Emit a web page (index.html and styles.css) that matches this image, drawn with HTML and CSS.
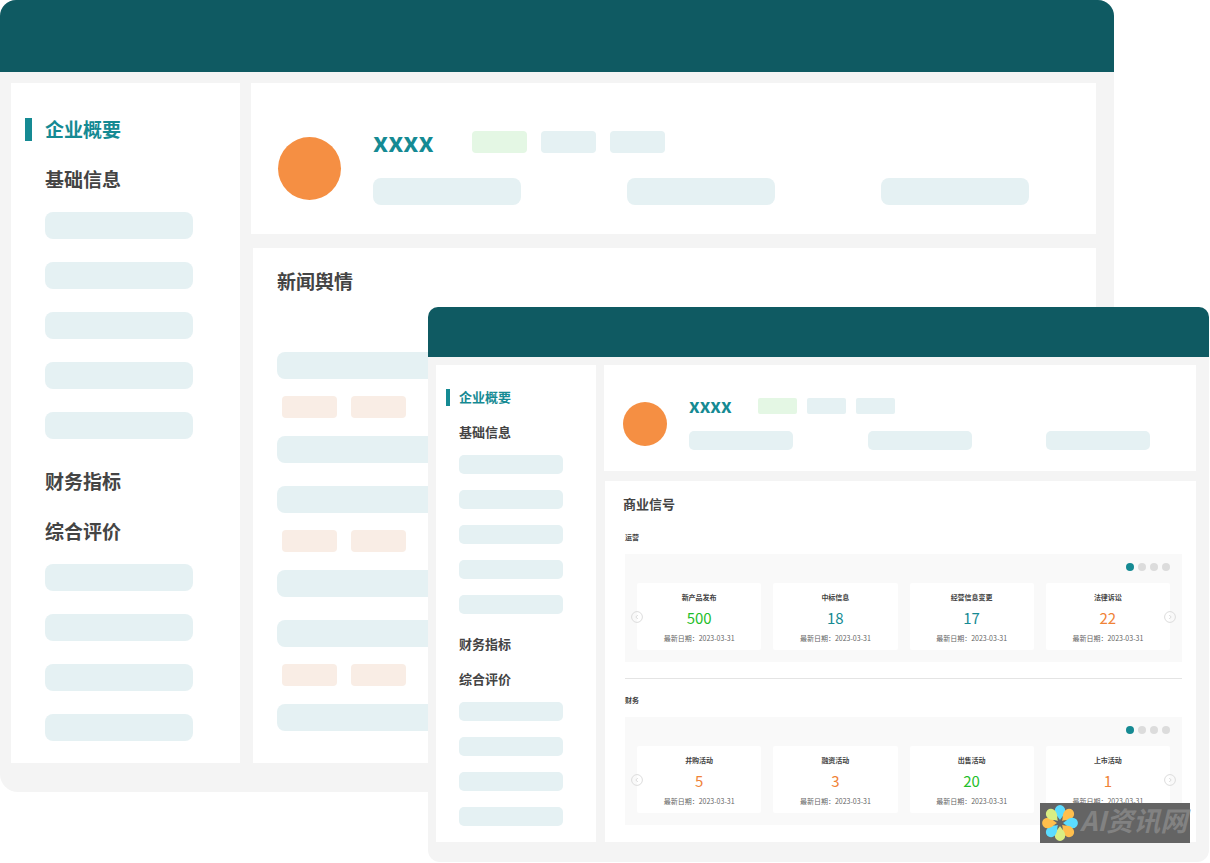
FILE: index.html
```html
<!DOCTYPE html>
<html lang="zh-CN">
<head>
<meta charset="utf-8">
<meta name="viewport" content="width=device-width, initial-scale=1">
<title>企业概要</title>
<link rel="stylesheet" href="styles.css">
</head>
<body>
<main class="stage">
  <section class="window window-back">
    <header class="titlebar"></header>
    <div class="window-body">
      <nav class="sidebar">
        <a class="nav-item active" href="#"><span class="marker"></span>企业概要</a>
        <a class="nav-item" href="#">基础信息</a>
        <div class="bars"><i class="bar"></i><i class="bar"></i><i class="bar"></i><i class="bar"></i><i class="bar"></i></div>
        <a class="nav-item" href="#">财务指标</a>
        <a class="nav-item" href="#">综合评价</a>
        <div class="bars"><i class="bar"></i><i class="bar"></i><i class="bar"></i><i class="bar"></i></div>
      </nav>
      <div class="content">
        <section class="profile">
          <div class="avatar"></div>
          <div class="profile-info">
            <div class="profile-head"><h1 class="name">xxxx</h1><i class="chip green"></i><i class="chip"></i><i class="chip"></i></div>
            <div class="profile-bars"><i class="bar"></i><i class="bar"></i><i class="bar"></i></div>
          </div>
        </section>
        <section class="panel news">
          <h2 class="panel-title">新闻舆情</h2>
          <div class="news-list">
            <div class="news-item"><i class="line"></i><div class="tags"><i class="chip peach"></i><i class="chip peach"></i></div><i class="line"></i></div>
            <div class="news-item"><i class="line"></i><div class="tags"><i class="chip peach"></i><i class="chip peach"></i></div><i class="line"></i></div>
            <div class="news-item"><i class="line"></i><div class="tags"><i class="chip peach"></i><i class="chip peach"></i></div><i class="line"></i></div>
          </div>
        </section>
      </div>
    </div>
  </section>

  <section class="window window-front">
    <header class="titlebar"></header>
    <div class="window-body">
      <nav class="sidebar">
        <a class="nav-item active" href="#"><span class="marker"></span>企业概要</a>
        <a class="nav-item" href="#">基础信息</a>
        <div class="bars"><i class="bar"></i><i class="bar"></i><i class="bar"></i><i class="bar"></i><i class="bar"></i></div>
        <a class="nav-item" href="#">财务指标</a>
        <a class="nav-item" href="#">综合评价</a>
        <div class="bars"><i class="bar"></i><i class="bar"></i><i class="bar"></i><i class="bar"></i></div>
      </nav>
      <div class="content">
        <section class="profile">
          <div class="avatar"></div>
          <div class="profile-info">
            <div class="profile-head"><h1 class="name">xxxx</h1><i class="chip green"></i><i class="chip"></i><i class="chip"></i></div>
            <div class="profile-bars"><i class="bar"></i><i class="bar"></i><i class="bar"></i></div>
          </div>
        </section>
        <section class="panel signals">
          <h2 class="panel-title">商业信号</h2>
          <section class="signal-group">
            <h3 class="group-title">运营</h3>
            <div class="carousel">
              <div class="dots"><button class="dot on" aria-label="1"></button><button class="dot" aria-label="2"></button><button class="dot" aria-label="3"></button><button class="dot" aria-label="4"></button></div>
              <div class="cards">
                <article class="card"><h4>新产品发布</h4><strong class="c-green">500</strong><p>最新日期：2023-03-31</p></article>
                <article class="card"><h4>中标信息</h4><strong class="c-teal">18</strong><p>最新日期：2023-03-31</p></article>
                <article class="card"><h4>经营信息变更</h4><strong class="c-teal">17</strong><p>最新日期：2023-03-31</p></article>
                <article class="card"><h4>法律诉讼</h4><strong class="c-orange">22</strong><p>最新日期：2023-03-31</p></article>
                <button class="arrow prev" aria-label="上一页"><svg viewBox="0 0 12 12"><circle cx="6" cy="6" r="5.4"/><path d="M6.8 4 4.8 6l2 2"/></svg></button>
                <button class="arrow next" aria-label="下一页"><svg viewBox="0 0 12 12"><circle cx="6" cy="6" r="5.4"/><path d="m5.2 4 2 2-2 2"/></svg></button>
              </div>
            </div>
          </section>
          <section class="signal-group">
            <h3 class="group-title">财务</h3>
            <div class="carousel">
              <div class="dots"><button class="dot on" aria-label="1"></button><button class="dot" aria-label="2"></button><button class="dot" aria-label="3"></button><button class="dot" aria-label="4"></button></div>
              <div class="cards">
                <article class="card"><h4>并购活动</h4><strong class="c-orange">5</strong><p>最新日期：2023-03-31</p></article>
                <article class="card"><h4>融资活动</h4><strong class="c-orange">3</strong><p>最新日期：2023-03-31</p></article>
                <article class="card"><h4>出售活动</h4><strong class="c-green">20</strong><p>最新日期：2023-03-31</p></article>
                <article class="card"><h4>上市活动</h4><strong class="c-orange">1</strong><p>最新日期：2023-03-31</p></article>
                <button class="arrow prev" aria-label="上一页"><svg viewBox="0 0 12 12"><circle cx="6" cy="6" r="5.4"/><path d="M6.8 4 4.8 6l2 2"/></svg></button>
                <button class="arrow next" aria-label="下一页"><svg viewBox="0 0 12 12"><circle cx="6" cy="6" r="5.4"/><path d="m5.2 4 2 2-2 2"/></svg></button>
              </div>
            </div>
          </section>
        </section>
      </div>
    </div>
    <div class="badge">
      <svg class="badge-logo" viewBox="-20 -20 40 40" aria-hidden="true">
        <defs><path id="petal" d="M0-3C-1.500-6-5.200-8-5.200-12.500A5.200 5.400 0 0 1 5.200-12.500C5.200-8 1.500-6 0-3Z"/></defs>
        <use href="#petal" fill="#5bdcff"/>
        <use href="#petal" fill="#ffbf4d" transform="rotate(45)"/>
        <use href="#petal" fill="#5bdcff" transform="rotate(90)"/>
        <use href="#petal" fill="#ffbf4d" transform="rotate(135)"/>
        <use href="#petal" fill="#d9ee83" transform="rotate(180)"/>
        <use href="#petal" fill="#5bdcff" transform="rotate(225)"/>
        <use href="#petal" fill="#ffbf4d" transform="rotate(270)"/>
        <use href="#petal" fill="#d9ee83" transform="rotate(315)"/>
      </svg>
      <span>AI资讯网</span>
    </div>
  </section>
</main>
</body>
</html>
```
FILE: styles.css
```css
* { box-sizing: border-box; }

body {
  margin: 0;
  background: #fff;
  color: #444;
  font-family: "Noto Sans CJK SC", "Noto Sans", sans-serif;
}

h1, h2, h3, h4, p { margin: 0; }
a { color: inherit; text-decoration: none; }
button { padding: 0; border: 0; background: none; }
i { display: block; }

.stage {
  position: relative;
  min-height: 862px;
}

.window { background: #f4f4f4; }
.titlebar { background: #0f5a62; }
.window-body { display: flex; }

.window-back {
  --text: 19px;
  --line: 28px;
  --nav-gap: 22px;
  --indent: 34px;
  --marker-pad: 14px;
  --marker-w: 7px;
  --marker-h: 23px;
  --bar-w: 148px;
  --bar-h: 27px;
  --bar-gap: 23px;
  --bars-top: 19px;
  --bars-bottom: 28px;
  --radius: 8px;
  --chip-w: 55px;
  --chip-h: 22px;
  --chip-gap: 14px;
  --avatar: 63px;
  --name: 27px;
  --name-w: 99px;
  --name-gap: 32px;
  margin-right: 96px;
  border-radius: 16px 16px 18px 18px;
}

.window-front {
  --text: 13px;
  --line: 20px;
  --nav-gap: 15px;
  --indent: 23px;
  --marker-pad: 10px;
  --marker-w: 4px;
  --marker-h: 17px;
  --bar-w: 104px;
  --bar-h: 19px;
  --bar-gap: 16px;
  --bars-top: 13px;
  --bars-bottom: 20px;
  --radius: 5px;
  --chip-w: 39px;
  --chip-h: 16px;
  --chip-gap: 10px;
  --avatar: 44px;
  --name: 19px;
  --name-w: 69px;
  --name-gap: 22px;
  position: absolute;
  top: 307px;
  left: 428px;
  right: 1px;
  border-radius: 10px 10px 12px 12px;
}

.window-back .titlebar { height: 72px; border-radius: 16px 16px 0 0; }
.window-front .titlebar { height: 50px; border-radius: 10px 10px 0 0; }
.window-back .window-body { gap: 11px; padding: 11px 18px 29px 11px; }
.window-front .window-body { gap: 8px; padding: 8px 13px 20px 8px; }

/* Sidebar */
.sidebar {
  display: flex;
  flex-direction: column;
  flex: none;
  background: #fff;
}
.window-back .sidebar { width: 229px; padding: 32px 0 22px; }
.window-front .sidebar { width: 160px; padding: 22px 0 15px; }

.nav-item {
  display: flex;
  align-items: center;
  padding-left: var(--indent);
  font-size: var(--text);
  font-weight: 700;
  line-height: var(--line);
}
.nav-item + .nav-item { margin-top: var(--nav-gap); }
.nav-item.active {
  padding-left: var(--marker-pad);
  color: #158a93;
}
.marker {
  width: var(--marker-w);
  height: var(--marker-h);
  margin-right: calc(var(--indent) - var(--marker-pad) - var(--marker-w));
  background: #158a93;
}
.bars {
  display: flex;
  flex-direction: column;
  gap: var(--bar-gap);
  margin-top: var(--bars-top);
  padding-left: var(--indent);
}
.bars + .nav-item { margin-top: var(--bars-bottom); }
.bar, .line {
  height: var(--bar-h);
  border-radius: var(--radius);
  background: #e5f1f3;
}
.bar { width: var(--bar-w); }

/* Content column */
.content {
  display: flex;
  flex: 1;
  flex-direction: column;
  min-width: 0;
}
.window-back .content { gap: 14px; }
.window-front .content { gap: 10px; }
.profile, .panel { background: #fff; }
.profile {
  display: flex;
  align-items: center;
  gap: var(--name-gap);
}
.window-back .profile { padding: 48px 67px 29px 27px; }
.window-front .profile { padding: 33px 46px 21px 19px; }
.avatar {
  flex: none;
  width: var(--avatar);
  height: var(--avatar);
  border-radius: 50%;
  background: #f58f43;
}
.profile-info { flex: 1; }
.profile-head {
  display: flex;
  align-items: center;
  gap: var(--chip-gap);
  height: var(--chip-h);
}
.name {
  width: calc(var(--name-w) - var(--chip-gap));
  padding-bottom: 3px;
  color: #158a93;
  font-size: var(--name);
  line-height: var(--chip-h);
}
.chip {
  width: var(--chip-w);
  height: var(--chip-h);
  border-radius: 4px;
  background: #e5f1f3;
}
.window-front .chip { border-radius: 2px; }
.chip.green { background: #e4f7e4; }
.chip.peach { background: #f9ede5; }
.profile-bars { display: flex; justify-content: space-between; }
.window-back .profile-bars { margin-top: 25px; }
.window-front .profile-bars { margin-top: 17px; }

.panel { flex: 1; }
.panel-title { font-size: var(--text); line-height: var(--line); }
.news { margin-left: 2px; padding: 19px 24px; }
.news-list {
  display: grid;
  gap: 23px;
  margin-top: 57px;
}
.news-item { display: grid; gap: 17px; }
.tags {
  display: flex;
  gap: var(--chip-gap);
  padding: 0 0 1px 5px;
}

/* Signals */
.signals { margin-left: 1px; padding: 13px 14px 17px 20px; }
.signals .panel-title { margin: 0 0 18px -2px; }
.signal-group + .signal-group {
  margin-top: 16px;
  padding-top: 16px;
  border-top: 1px solid #e4e4e4;
}
.group-title { font-size: 7px; line-height: 10px; }
.carousel {
  margin-top: 12px;
  padding: 9px 12px 12px;
  background: #f9f9f9;
}
.dots { display: flex; justify-content: flex-end; gap: 4px; }
.dot {
  width: 8px;
  height: 8px;
  border-radius: 50%;
  background: #dcdcdc;
}
.dot.on { background: #158a93; }
.cards {
  display: grid;
  grid-template-columns: repeat(4, 1fr);
  gap: 12px;
  position: relative;
  margin-top: 12px;
}
.card {
  display: flex;
  flex-direction: column;
  align-items: center;
  padding: 9px 0 7px;
  border-radius: 2px;
  background: #fff;
}
.card h4, .card p { font-size: 7px; line-height: 10px; }
.card p { color: #666; }
.card strong {
  margin: 7px 0 6px;
  font-size: 15px;
  font-weight: 400;
  line-height: 18px;
}
.c-green { color: #1fbe2b; }
.c-teal { color: #158a93; }
.c-orange { color: #f08337; }

.arrow {
  position: absolute;
  top: calc(50% - 6px);
  width: 12px;
  height: 12px;
}
.arrow.prev { left: -6px; }
.arrow.next { right: -6px; }
.arrow svg {
  display: block;
  fill: none;
  stroke: #dcdcdc;
}

/* Corner badge */
.badge {
  display: flex;
  align-items: center;
  position: absolute;
  right: 19px;
  bottom: 19px;
  width: 150px;
  height: 40px;
  background: #646464;
  color: #828282;
  font-size: 27px;
  font-style: italic;
  font-weight: 700;
  line-height: 34px;
  white-space: nowrap;
}
.badge span { padding-bottom: 6px; }
.badge-logo { flex: none; width: 40px; height: 40px; }
```
